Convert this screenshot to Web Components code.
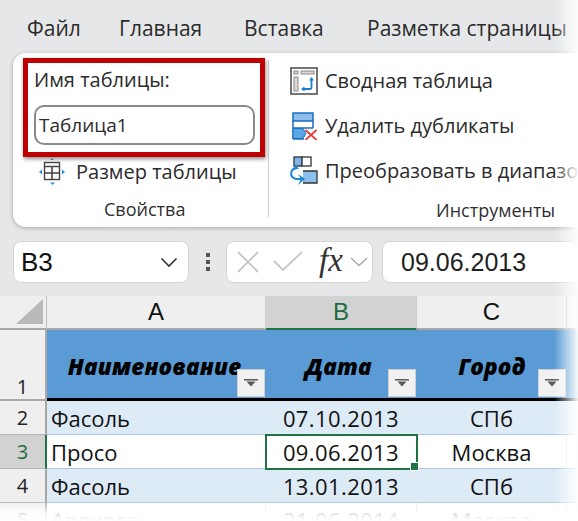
<!doctype html>
<html lang="ru">
<head>
<meta charset="utf-8">
<title>Таблица</title>
<style>
  html,body{margin:0;height:100%;overflow:hidden;background:#e6e7e9}
  body{font-family:"Open Sans","Noto Sans",sans-serif}
</style>
</head>
<body>
<xl-window>
  <xl-tabs>
    <span style="width:92px;margin-left:27px">Файл</span>
    <span style="width:125px">Главная</span>
    <span style="width:123px">Вставка</span>
    <span>Разметка страницы</span>
  </xl-tabs>
  <xl-ribbon></xl-ribbon>
  <xl-formula-bar name="B3" value="09.06.2013"></xl-formula-bar>
  <xl-sheet></xl-sheet>
</xl-window>

<script>
(() => {
  "use strict";

  const ICONS = {
    size: `<svg width="28" height="28" viewBox="0 0 28 28"><path d="M12 2h4l-2-1.600zM12 24.500h5l-2.500 2.500z" fill="#2f8fdc"/><path d="M1 14l3-2.500v5zM27 14l-3-2.500v5z" fill="#2f8fdc"/><rect x="6.500" y="4.500" width="15" height="17" fill="#fff" stroke="#444" stroke-width="1.400"/><path d="M6.500 8.500h15M6.500 15h15M14 8.500v13" stroke="#444" stroke-width="1.600" fill="none"/></svg>`,
    pivot: `<svg width="28" height="28" viewBox="0 0 28 28"><rect x="1" y="1" width="26" height="26" fill="#fff" stroke="#666" stroke-width="1.800"/><rect x="4" y="4" width="4" height="3" fill="#d9d9d9" stroke="#8a8a8a"/><rect x="11" y="4" width="13" height="3" fill="#d9d9d9" stroke="#8a8a8a"/><rect x="4" y="10" width="4" height="14" fill="#d9d9d9" stroke="#8a8a8a"/><path d="M21.500 12v8.500a1.500 1.500 0 0 1-1.500 1.500h-6" fill="none" stroke="#1b7fcf" stroke-width="1.800"/><path d="M19 13.500l2.500-3.500 2.500 3.500zM14.500 19.500l-3.500 2.500 3.500 2.500z" fill="#1b7fcf"/></svg>`,
    dedupe: `<svg width="28" height="28" viewBox="0 0 28 28"><rect x="3" y="1" width="20" height="8" fill="#8cbcea" stroke="#1b6ec2" stroke-width="1.500"/><path d="M3 9v18M3 16h20M23 9v7" fill="none" stroke="#1b6ec2" stroke-width="1.500"/><path d="M3 16.500h10l3 5-3 5H3z" fill="#5aa5e6" stroke="#1b6ec2"/><path d="M3 27h11" stroke="#1b6ec2" stroke-width="1.500"/><path d="M15.500 18l11 10M26.500 18l-11 10" stroke="#e5393b" stroke-width="1.700"/></svg>`,
    convert: `<svg width="30" height="30" viewBox="0 0 30 30"><rect x="5" y="1" width="8" height="9" fill="#7db7ea" stroke="#333" stroke-width="1.300"/><rect x="13" y="1" width="9" height="9" fill="#fff" stroke="#333" stroke-width="1.300"/><path d="M14 15h14v12H14" fill="#8cc0ee" stroke="#333" stroke-width="1.300"/><path d="M7 11.500C1 14 0 21 7 23h6" fill="none" stroke="#1e88d8" stroke-width="2"/><path d="M6 9l4 3.500-5 1.500zM9 18l7 5-7 6 3-6z" fill="#1e88d8"/></svg>`
  };

  class XlWindow extends HTMLElement {
    constructor() {
      super();
      this.attachShadow({ mode: "open" }).innerHTML = `
        <style>
          :host{display:block;position:relative;width:578px;height:521px;overflow:hidden;background:#e6e7e9}
          .fade-r{position:absolute;top:0;right:0;bottom:0;width:24px;
            background:linear-gradient(90deg,rgba(255,255,255,0),rgba(255,255,255,.95))}
          .fade-b{position:absolute;left:0;right:0;bottom:0;height:20px;
            background:linear-gradient(180deg,rgba(255,255,255,0),rgba(255,255,255,.85) 60%,#fff)}
        </style>
        <slot></slot>
        <div class="fade-r"></div>
        <div class="fade-b"></div>`;
    }
  }

  class XlTabs extends HTMLElement {
    constructor() {
      super();
      this.attachShadow({ mode: "open" }).innerHTML = `
        <style>
          :host{display:flex;align-items:center;height:53px;padding-top:3px;box-sizing:border-box;
            white-space:nowrap;font:21px/1 "Open Sans",sans-serif;color:#2b2b2b}
          ::slotted(span){display:block;flex:none}
        </style>
        <slot></slot>`;
    }
  }

  class XlTool extends HTMLElement {
    constructor() {
      super();
      this.attachShadow({ mode: "open" }).innerHTML = `
        <style>
          :host{display:flex;align-items:center;height:45px;white-space:nowrap;
            font:20px/1 "Open Sans",sans-serif;color:#2b2b2b}
          .ico{display:flex;width:28px;height:30px;align-items:center;justify-content:center;flex:none}
          .lbl{margin-left:var(--lbl-gap,7px)}
        </style>
        <span class="ico"><slot name="icon"></slot></span>
        <span class="lbl"><slot></slot></span>`;
    }
  }

  class XlRibbon extends HTMLElement {
    constructor() {
      super();
      const tool = (icon, text, style = "") =>
        `<xl-tool style="${style}"><span slot="icon" style="display:flex">${ICONS[icon]}</span>${text}</xl-tool>`;
      this.attachShadow({ mode: "open" }).innerHTML = `
        <style>
          :host{display:flex;position:relative;height:174px;margin-left:13px;box-sizing:border-box;
            background:#fff;border-radius:13px 0 0 13px;box-shadow:0 1px 4px rgba(0,0,0,.28);
            font-family:"Open Sans",sans-serif}
          .group{display:flex;flex-direction:column;flex:none}
          .props{width:255px}
          .sep{width:1px;height:157px;margin-top:7px;background:#cfcfcf;flex:none}
          .tools{padding:5px 0 0 21px}
          .caption{font-size:18px;line-height:22px;color:#2f2f2f;white-space:nowrap}
          .form{padding:15px 0 0 21px;height:83px}
          .label{font-size:20px;line-height:24px;color:#2b2b2b}
          .input{margin-top:13px;width:221px;height:40px;box-sizing:border-box;border:2px solid #8a8a8a;border-radius:10px;
            padding:0 3px;display:flex;align-items:center;font-size:19px;color:#2b2b2b}
          .props .caption{margin:11px 0 0 91px}
          .tools .caption{margin:6px 0 0 146px}
          /* the red call-out lies over the ribbon */
          .callout{position:absolute;left:10px;top:5px;width:242px;height:99px;box-sizing:border-box;
            border:5px solid #c00000;box-shadow:1px 2px 4px rgba(0,0,0,.45)}
        </style>
        <div class="group props">
          <div class="form">
            <div class="label">Имя таблицы:</div>
            <div class="input">Таблица1</div>
          </div>
          ${tool("size", "Размер таблицы", "height:30px;margin:6px 0 0 25px;--lbl-gap:10px")}
          <div class="caption">Свойства</div>
        </div>
        <div class="sep"></div>
        <div class="group tools">
          ${tool("pivot", "Сводная таблица")}
          ${tool("dedupe", "Удалить дубликаты")}
          ${tool("convert", "Преобразовать в диапазон")}
          <div class="caption">Инструменты</div>
        </div>
        <div class="callout"></div>`;
    }
  }

  class XlFormulaBar extends HTMLElement {
    constructor() {
      super();
      this.attachShadow({ mode: "open" }).innerHTML = `
        <style>
          :host{display:flex;align-items:center;height:42px;margin-top:14px;padding-left:13px;box-sizing:border-box;
            font-family:"Liberation Sans",sans-serif;color:#111}
          .box{height:42px;box-sizing:border-box;background:#fff;border:1px solid #d4d4d4;border-radius:8px;
            display:flex;align-items:center;flex:none}
          .name{width:176px;font-size:26px;padding:0 10px 0 7px;justify-content:space-between}
          .dots{width:37px;display:flex;flex-direction:column;align-items:center;gap:3px;flex:none}
          .dots i{width:4px;height:4px;background:#555;display:block}
          .fx{width:147px;padding-left:9px;gap:13px}
          .fx em{font:italic 33px/1 "Liberation Serif",serif;color:#333;margin:-4px 0 0 3px}
          .val{width:240px;margin-left:9px;font-size:25px;padding-left:18px;color:#1f1f1f}
        </style>
        <div class="box name"><span>${this.getAttribute("name")}</span>
          <svg width="18" height="11" viewBox="0 0 18 11"><path d="M1.500 1.500L9 9l7.500-7.500" fill="none" stroke="#333" stroke-width="1.600"/></svg>
        </div>
        <div class="dots"><i></i><i></i><i></i></div>
        <div class="box fx">
          <svg width="24" height="24" viewBox="0 0 24 24"><path d="M2 2l20 20M22 2L2 22" stroke="#c6c6c6" stroke-width="1.800"/></svg>
          <svg width="30" height="22" viewBox="0 0 30 22"><path d="M1 10l9 9L29 1" fill="none" stroke="#c6c6c6" stroke-width="1.800"/></svg>
          <em>fx</em>
          <svg width="18" height="10" viewBox="0 0 18 10" style="margin-left:-6px"><path d="M1 1l8 7.500L17 1" fill="none" stroke="#aaa" stroke-width="1.500"/></svg>
        </div>
        <div class="box val">${this.getAttribute("value")}</div>`;
    }
  }

  class XlSheet extends HTMLElement {
    constructor() {
      super();
      const filter = `<span class="flt"><svg width="16" height="8" viewBox="0 0 16 8"><path d="M1 0h14v1.500H1zM3.500 2.500h9L8 7.500z" fill="#5a5a5a"/></svg></span>`;
      const rows = [
        ["2", "Фасоль", "07.10.2013", "СПб", "band"],
        ["3", "Просо", "09.06.2013", "Москва", "cur"],
        ["4", "Фасоль", "13.01.2013", "СПб", "band"],
        ["5", "Авокадо", "21.06.2014", "Москва", ""]
      ];
      const body = rows.map(([n, a, b, c, k]) => `
        <div class="rh ${k === "cur" ? "on" : ""}">${n}</div>
        <div class="c l ${k}">${a}</div>
        <div class="c m d ${k} ${k === "cur" ? "sel" : ""}">${b}</div>
        <div class="c m ${k}">${c}</div>
        <div class="c ${k}"></div>`).join("");
      this.attachShadow({ mode: "open" }).innerHTML = `
        <style>
          :host{display:grid;grid-template-columns:47px 219px 151px 150px 1fr;
            grid-template-rows:34px 71px repeat(4,34px);margin-top:13px;background:#fff;
            font:22px/1 "Open Sans",sans-serif;color:#111}
          .corner,.ch,.rh{background:#efefef;box-sizing:border-box;display:flex;align-items:center;justify-content:center}
          .corner{border-right:1px solid #bdbdbd;border-bottom:2px solid #a8a8a8;align-items:flex-end;justify-content:flex-end;padding:0 3px 4px 0}
          .ch{font:24px/1 "Liberation Sans",sans-serif;border-right:1px solid #d0d0d0;border-bottom:2px solid #a8a8a8}
          .ch.on{background:#d2d2d2;color:#1d6b43;border-bottom-color:#217346}
          .rh{border-right:2px solid #a8a8a8;border-bottom:1px solid #b5b5b5;font-size:20px;color:#222}
          .rh.on{background:#d2d2d2;color:#1d6b43;border-right-color:#217346}
          .rh.tall{align-items:flex-end;padding-bottom:2px;border-bottom:2px solid #a8a8a8}
          .h{background:#5b9bd5;border-bottom:3px solid #000;position:relative;display:flex;align-items:center;justify-content:center;
            font:italic 800 22.500px/1 "Open Sans",sans-serif;color:#000;padding-top:6px;box-sizing:border-box;letter-spacing:.1px}
          .flt{position:absolute;right:1px;bottom:1px;width:28px;height:28px;box-sizing:border-box;background:#f1f1f1;border:1px solid #cfcfcf;
            display:flex;align-items:center;justify-content:center}
          .c{display:flex;align-items:center;box-sizing:border-box;border-bottom:1px solid #a9c4e6;position:relative;border-right:1px solid #e4e4e4}
          .d{letter-spacing:.4px}
          .band{background:#ddebf7;border-right-color:#ddebf7}
          .cur{background:#fff}
          .l{padding-left:4px}
          .m{justify-content:center}
          .sel{outline:2px solid #217346;outline-offset:-1px;z-index:1}
          .sel::after{content:"";position:absolute;right:-3px;bottom:-3px;width:7px;height:7px;background:#217346;border:1px solid #fff}
        </style>
        <div class="corner"><svg width="27" height="25" viewBox="0 0 27 25"><path d="M27 0v25H0z" fill="#b9b9b9"/></svg></div>
        <div class="ch">A</div><div class="ch on">B</div><div class="ch">C</div><div class="ch"></div>
        <div class="rh tall">1</div>
        <div class="h" style="padding-right:4px">Наименование${filter}</div>
        <div class="h" style="padding-right:6px">Дата${filter}</div>
        <div class="h">Город${filter}</div>
        <div class="h"></div>
        ${body}`;
    }
  }

  customElements.define("xl-window", XlWindow);
  customElements.define("xl-tabs", XlTabs);
  customElements.define("xl-tool", XlTool);
  customElements.define("xl-ribbon", XlRibbon);
  customElements.define("xl-formula-bar", XlFormulaBar);
  customElements.define("xl-sheet", XlSheet);
})();
</script>
</body>
</html>
